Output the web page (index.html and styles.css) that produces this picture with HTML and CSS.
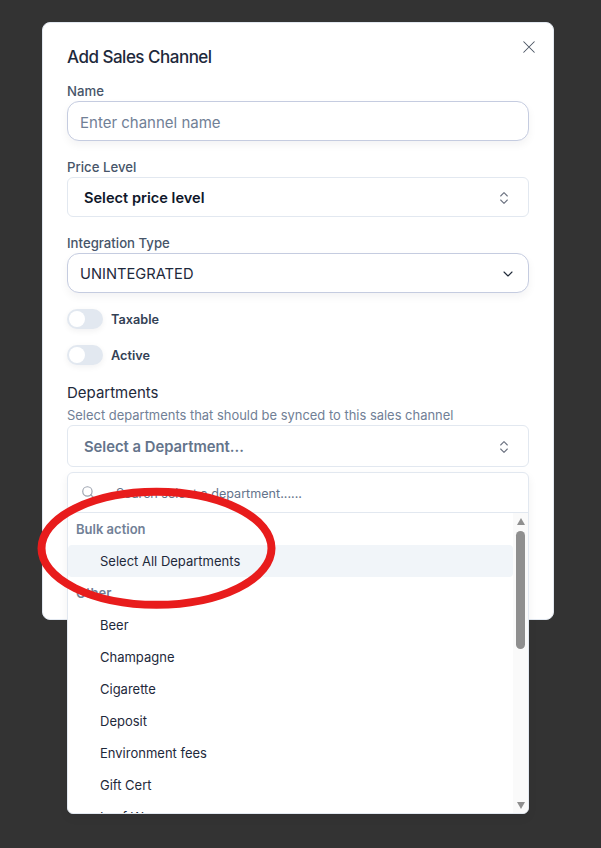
FILE: index.html
```html
<!DOCTYPE html>
<html lang="en">
<head>
    <meta charset="UTF-8">
    <title>Add Sales Channel</title>
    <link rel="stylesheet" href="styles.css">
</head>
<body>
<div class="modal">
    <button class="close">
        <svg width="18" height="18" viewBox="0 0 24 24" fill="none" stroke="#4b5563" stroke-width="1.4" stroke-linecap="round"><path d="M19 5 5 19M5 5l14 14"/></svg>
    </button>
    <h2 class="title">Add Sales Channel</h2>

    <div class="field field-name">
        <label class="label">Name</label>
        <div class="input placeholder">Enter channel name</div>
    </div>

    <div class="field field-price">
        <label class="label">Price Level</label>
        <div class="combo">
            <span>Select price level</span>
            <svg class="updown" width="16" height="16" viewBox="0 0 24 24" fill="none" stroke="#6b7280" stroke-width="1.6" stroke-linecap="round" stroke-linejoin="round"><path d="m7 15 5 5 5-5M7 9l5-5 5 5"/></svg>
        </div>
    </div>

    <div class="field field-type">
        <label class="label">Integration Type</label>
        <div class="input select">
            <span>UNINTEGRATED</span>
            <svg width="16" height="16" viewBox="0 0 24 24" fill="none" stroke="#1f2937" stroke-width="1.6" stroke-linecap="round" stroke-linejoin="round"><path d="m6 9 6 6 6-6"/></svg>
        </div>
    </div>

    <div class="toggle-row">
        <span class="toggle"><i></i></span>
        <span class="toggle-text">Taxable</span>
    </div>
    <div class="toggle-row">
        <span class="toggle"><i></i></span>
        <span class="toggle-text">Active</span>
    </div>

    <div class="dept-title">Departments</div>
    <div class="dept-help">Select departments that should be synced to this sales channel</div>
    <div class="combo combo-dept">
        <span>Select a Department...</span>
        <svg class="updown" width="16" height="16" viewBox="0 0 24 24" fill="none" stroke="#6b7280" stroke-width="1.6" stroke-linecap="round" stroke-linejoin="round"><path d="m7 15 5 5 5-5M7 9l5-5 5 5"/></svg>
    </div>

    <div class="popover">
        <div class="search">
            <svg class="search-icon" width="14" height="14" viewBox="0 0 24 24" fill="none" stroke="#9ca3af" stroke-width="2" stroke-linecap="round" stroke-linejoin="round"><circle cx="11" cy="11" r="8"/><path d="m21 21-4.3-4.3"/></svg>
            <span>Search select a department......</span>
        </div>
        <div class="list">
            <div class="items">
                <div class="group">Bulk action</div>
                <div class="item selected">Select All Departments</div>
                <div class="group">Other</div>
                <div class="item">Beer</div>
                <div class="item">Champagne</div>
                <div class="item">Cigarette</div>
                <div class="item">Deposit</div>
                <div class="item">Environment fees</div>
                <div class="item">Gift Cert</div>
                <div class="item">Leaf Wrap</div>
            </div>
            <div class="scrollbar">
                <span class="arrow-up"></span>
                <span class="thumb"></span>
                <span class="arrow-down"></span>
            </div>
        </div>
    </div>
</div>

<svg class="circle" width="601" height="848" viewBox="0 0 601 848" fill="none">
    <ellipse cx="156.5" cy="548.3" rx="115" ry="56.5" stroke="#e81c1c" stroke-width="8"/>
</svg>
</body>
</html>
```

FILE: styles.css
```css
*{
    margin: 0;
    padding: 0;
    box-sizing: border-box;
}
html, body{
    height: 848px;
    overflow: hidden;
}
body{
    background-color: #333333;
    font-family: Inter, "Liberation Sans", sans-serif;
    color: #111827;
    padding: 22px 47px 0 42px;
}
.modal{
    position: relative;
    width: 512px;
    height: 598px;
    background-color: #fff;
    border: 1px solid #e2e8f0;
    border-radius: 8px;
    padding: 22px 24px 0;
}
.close{
    position: absolute;
    top: 15px;
    right: 15px;
    width: 18px;
    height: 18px;
    border: 0;
    background: none;
}
.title{
    font-size: 17px;
    line-height: 24px;
    font-weight: 500;
    letter-spacing: -0.5px;
    color: #1e293b;
}
.label{
    display: block;
    font-size: 13.2px;
    line-height: 16px;
    font-weight: 500;
    color: #475569;
}
.field-name{
    margin-top: 14px;
}
.field-price{
    margin-top: 18px;
}
.field-type{
    margin-top: 18px;
}
.input{
    width: 462px;
    height: 40px;
    margin-top: 2px;
    border: 1px solid #c5cce0;
    border-radius: 12px;
    padding: 1px 12px 0;
    font-size: 15px;
    display: flex;
    align-items: center;
    background-color: #fff;
    box-shadow: 0 4px 8px rgba(15, 23, 42, 0.05);
}
.placeholder{
    padding-top: 3px;
    color: #718096;
}
.select{
    justify-content: space-between;
    font-size: 14.7px;
    color: #1e293b;
}
.combo{
    width: 462px;
    height: 40px;
    margin-top: 2px;
    border: 1px solid #e2e8f0;
    border-radius: 6px;
    padding: 1px 16px 0;
    display: flex;
    align-items: center;
    justify-content: space-between;
    font-size: 14.6px;
    font-weight: 600;
    color: #0f172a;
    background-color: #fff;
}
.toggle-row{
    display: flex;
    align-items: center;
    gap: 8px;
    height: 20px;
    margin-top: 16px;
}
.toggle{
    display: block;
    width: 36px;
    height: 20px;
    border-radius: 10px;
    background-color: #e2e8f0;
    padding: 2px;
    box-shadow: 0 2px 6px rgba(15, 23, 42, 0.06);
}
.toggle i{
    display: block;
    width: 16px;
    height: 16px;
    border-radius: 50%;
    background-color: #fff;
}
.toggle-text{
    font-size: 12.7px;
    font-weight: 600;
    color: #334155;
}
.dept-title{
    margin-top: 18px;
    font-size: 15px;
    line-height: 20px;
    color: #1e293b;
}
.dept-help{
    margin-top: 4px;
    font-size: 12.95px;
    line-height: 16px;
    color: #718096;
}
.combo-dept{
    height: 42px;
    margin-top: 2px;
    font-size: 14.8px;
    color: #64748b;
}
.popover{
    position: absolute;
    left: 24px;
    top: 449px;
    width: 462px;
    height: 342px;
    background-color: #fff;
    border: 1px solid #e2e8f0;
    border-radius: 6px;
    overflow: hidden;
    box-shadow: 0 4px 10px rgba(15, 23, 42, 0.06);
}
.search{
    display: flex;
    align-items: center;
    gap: 21px;
    height: 40px;
    padding: 2px 13px 0;
    border-bottom: 1px solid #e2e8f0;
    font-size: 12.6px;
    color: #64748b;
}
.search-icon{
    margin-top: -3px;
}
.list{
    display: flex;
    height: 300px;
    overflow: hidden;
}
.items{
    flex: 1;
}
.group{
    height: 32px;
    padding-left: 8px;
    display: flex;
    align-items: center;
    font-size: 13px;
    font-weight: 600;
    color: #718096;
}
.item{
    height: 32px;
    padding-left: 32px;
    display: flex;
    align-items: center;
    font-size: 13px;
    color: #1e293b;
    border-radius: 4px;
}
.selected{
    background-color: #f1f5f9;
}
.scrollbar{
    width: 15px;
    background-color: #fafafa;
    display: flex;
    flex-direction: column;
    align-items: center;
    padding-top: 5px;
}
.thumb{
    width: 9px;
    height: 118px;
    border-radius: 5px;
    background-color: #8f8f8f;
    margin-top: 6px;
}
.arrow-up, .arrow-down{
    width: 0;
    height: 0;
    border-left: 4.5px solid transparent;
    border-right: 4.5px solid transparent;
}
.arrow-up{
    border-bottom: 7px solid #8f8f8f;
}
.arrow-down{
    border-top: 7px solid #8f8f8f;
    margin-top: 153px;
}
.circle{
    position: absolute;
    left: 0;
    top: 0;
}
```
